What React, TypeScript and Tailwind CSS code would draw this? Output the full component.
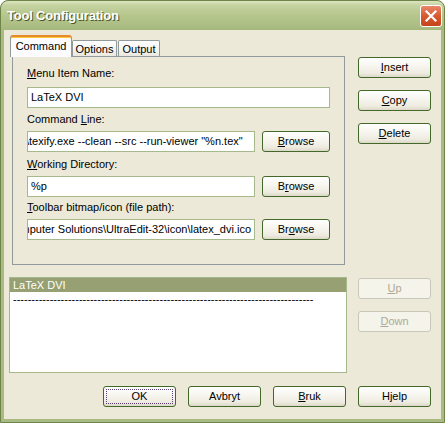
import React from 'react';

type BtnProps = {
  children: React.ReactNode;
  w?: string;
  disabled?: boolean;
  focus?: boolean;
};

const Btn = ({ children, w = 'w-[73px]', disabled, focus }: BtnProps) => (
  <div
    className={
      disabled
        ? `${w} h-[21px] shrink-0 rounded-[3px] border border-[#C9C7BA] bg-[#F5F4EA] flex items-center justify-center text-[11px] text-[#ACA899]`
        : `${w} h-[21px] shrink-0 rounded-[3px] border border-[#43682A] bg-[linear-gradient(180deg,#FFFFFF_0%,#F7F6F0_40%,#EEEBE0_80%,#DCD8C8_100%)] flex items-center justify-center text-[11px] text-black relative`
    }
  >
    {focus && <div className="absolute inset-[2px] border border-dotted border-[#5B3F7A]" />}
    <span className="leading-none">{children}</span>
  </div>
);

const Field = ({ children, w, right }: { children: React.ReactNode; w: string; right?: boolean }) => (
  <div
    className={`${w} h-[21px] shrink-0 border border-[#A5B98D] bg-white flex items-center overflow-hidden px-[3px] text-[11px] text-black whitespace-nowrap ${
      right ? 'justify-end' : ''
    }`}
  >
    {children}
  </div>
);

const Label = ({ children, className = '' }: { children: React.ReactNode; className?: string }) => (
  <div className={`h-[13px] leading-[13px] text-[11px] text-black ${className}`}>{children}</div>
);

export default function App() {
  return (
    <div className="w-[445px] h-[423px] flex flex-col rounded-t-[8px] border border-[#6E8448] bg-[#A9BB82] font-['Liberation_Sans',Arial,sans-serif] overflow-hidden">
      {/* title bar */}
      <div className="h-[29px] shrink-0 flex items-center pl-[6px] pr-[2px] rounded-t-[7px] bg-[linear-gradient(180deg,#DDE6C3_0%,#C6D3A2_14%,#B7C78E_45%,#ADBF85_80%,#A4B77C_100%)]">
        <span className="text-[13px] font-bold text-white [text-shadow:1px_1px_0_#4A5A2A] tracking-[-0.2px]">
          Tool Configuration
        </span>
        <div className="ml-auto w-[22px] h-[22px] rounded-[3px] border border-white bg-[linear-gradient(180deg,#E9876A_0%,#D8592F_50%,#C6431C_100%)] flex items-center justify-center">
          <svg width="12" height="12" viewBox="0 0 12 12">
            <path d="M1.5 1.5 L10.5 10.5 M10.5 1.5 L1.5 10.5" stroke="white" strokeWidth="2.2" strokeLinecap="square" />
          </svg>
        </div>
      </div>

      {/* dialog body */}
      <div className="flex-1 mx-[3px] mb-[3px] bg-[#ECE9D8] pt-[5px] pl-[5px] flex flex-col">
        {/* tabs + buttons */}
        <div className="flex items-start">
          <div className="flex flex-col">
            <div className="h-[22px] flex items-end ml-[1px]">
              <div className="relative z-10 w-[62px] h-[22px] rounded-t-[3px] border-x border-[#919B9C] border-t-2 border-t-[#E68B2C] shadow-[inset_0_1px_0_#FFC73C] bg-[#FCFCFE] flex items-center justify-center text-[11px] text-black pb-[1px]">
                Command
              </div>
              <div className="w-[45px] h-[17px] rounded-t-[2px] border border-b-0 border-[#919B9C] bg-[linear-gradient(180deg,#FFFFFF_0%,#F3F2EC_60%,#E8E6DC_100%)] flex items-center justify-center text-[11px] text-black pt-[1px]">
                Options
              </div>
              <div className="ml-[1px] w-[42px] h-[17px] rounded-t-[2px] border border-b-0 border-[#919B9C] bg-[linear-gradient(180deg,#FFFFFF_0%,#F3F2EC_60%,#E8E6DC_100%)] flex items-center justify-center text-[11px] text-black pt-[1px]">
                Output
              </div>
            </div>
            <div className="ml-[3px] -mt-px w-[333px] h-[209px] border border-[#919B9C] pt-[10px] pl-[14px] flex flex-col">
              <Label className="mb-[7px]">
                <u>M</u>enu Item Name:
              </Label>
              <Field w="w-[303px]">LaTeX DVI</Field>

              <Label className="mt-[5px] mb-[5px]">
                Command <u>L</u>ine:
              </Label>
              <div className="flex items-center gap-[7px]">
                <Field w="w-[228px]">
                  <span className="-ml-[5px]">\texify.exe --clean --src --run-viewer "%n.tex"</span>
                </Field>
                <Btn w="w-[68px]">
                  <u>B</u>rowse
                </Btn>
              </div>

              <Label className="mt-[6px] mb-[5px]">
                <u>W</u>orking Directory:
              </Label>
              <div className="flex items-center gap-[7px]">
                <Field w="w-[228px]">%p</Field>
                <Btn w="w-[68px]">
                  B<u>r</u>owse
                </Btn>
              </div>

              <Label className="mt-[4px] mb-[5px]">
                <u>T</u>oolbar bitmap/icon (file path):
              </Label>
              <div className="flex items-center gap-[7px]">
                <Field w="w-[228px]" right>
                  IDM Computer Solutions\UltraEdit-32\icon\latex_dvi.ico
                </Field>
                <Btn w="w-[68px]">
                  Br<u>o</u>wse
                </Btn>
              </div>
            </div>
          </div>

          <div className="ml-[13px] mt-[22px] flex flex-col gap-[12px]">
            <Btn>
              <u>I</u>nsert
            </Btn>
            <Btn>
              <u>C</u>opy
            </Btn>
            <Btn>
              <u>D</u>elete
            </Btn>
          </div>
        </div>

        {/* list + up/down */}
        <div className="mt-[12px] flex items-start">
          <div className="w-[338px] h-[96px] border border-[#A5B98D] bg-white flex flex-col text-[11px]">
            <div className="h-[14px] leading-[14px] bg-[#96A073] text-white pl-[3px]">LaTeX DVI</div>
            <div className="h-[14px] leading-[14px] text-black pl-[3px] whitespace-nowrap overflow-hidden">
              {'-'.repeat(82)}
            </div>
          </div>
          <div className="ml-[11px] mt-[1px] flex flex-col gap-[12px]">
            <Btn disabled>
              <u>U</u>p
            </Btn>
            <Btn disabled>
              <u>D</u>own
            </Btn>
          </div>
        </div>

        {/* bottom buttons */}
        <div className="mt-[13px] ml-[94px] flex gap-[12px]">
          <Btn focus>OK</Btn>
          <Btn>Avbryt</Btn>
          <Btn>
            <u>B</u>ruk
          </Btn>
          <Btn>Hjelp</Btn>
        </div>
      </div>
    </div>
  );
}
